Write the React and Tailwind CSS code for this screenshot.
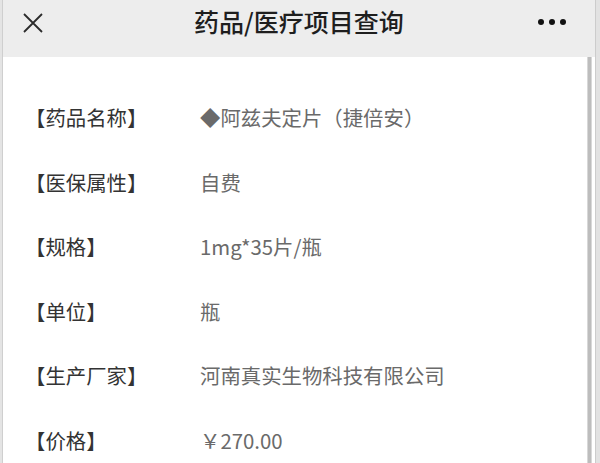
import React from "react";

const rows = [
  ["【药品名称】", "◆阿兹夫定片（捷倍安）"],
  ["【医保属性】", "自费"],
  ["【规格】", "1mg*35片/瓶"],
  ["【单位】", "瓶"],
  ["【生产厂家】", "河南真实生物科技有限公司"],
  ["【价格】", "￥270.00"],
];

export default function App() {
  return (
    <div className="w-[600px] h-[463px] flex overflow-hidden bg-white font-['Noto_Sans_CJK_SC','Noto_Sans',sans-serif]">
      <div className="w-[3px] bg-[#e4e4e4] border-r border-[#cfcfcf]" />
      <div className="flex-1 flex flex-col">
        <div className="h-[57px] bg-[#ededed] flex items-center relative shrink-0">
          <div className="pl-[19px] w-[60px] pb-[12px]">
            <svg width="22" height="22" viewBox="0 0 22 22">
              <path d="M2 2 L20 20 M20 2 L2 20" stroke="#2b2b2b" strokeWidth="1.8" fill="none" />
            </svg>
          </div>
          <div className="flex-1 text-center text-[25px] font-medium text-[#1e1e1e] leading-none pb-[14px]">
            药品/医疗项目查询
          </div>
          <div className="w-[60px] flex gap-[5px] items-center pr-[29px] justify-end pb-[13px]">
            <span className="w-[6px] h-[6px] rounded-full bg-[#111] shrink-0" />
            <span className="w-[6px] h-[6px] rounded-full bg-[#111] shrink-0" />
            <span className="w-[6px] h-[6px] rounded-full bg-[#111] shrink-0" />
          </div>
        </div>
        <div className="flex-1 flex">
          <div className="flex-1 bg-white pt-[28px] pl-[22px]">
            {rows.map(([k, v]) => (
              <div key={k} className="h-[64.6px] flex items-center text-[20.4px]">
                <div className="w-[175px] text-[#333333]">{k}</div>
                <div className="text-[#6a6a6a]">{v}</div>
              </div>
            ))}
          </div>
          <div className="w-[5px] bg-[#bdbdbd] border-x border-[#d8d8d8]" />
          <div className="w-[3px] bg-white" />
        </div>
      </div>
      <div className="w-[5px] bg-[#e2e2e2] border-l border-[#cccccc]" />
    </div>
  );
}
